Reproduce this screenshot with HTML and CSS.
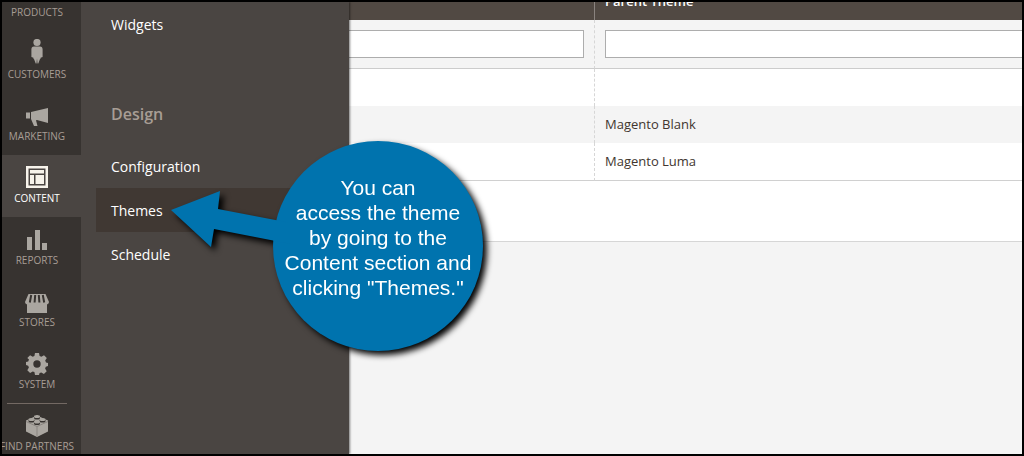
FILE: index.html
```html
<!DOCTYPE html>
<html lang="en">
<head>
    <meta charset="UTF-8">
    <meta name="viewport" content="width=device-width, initial-scale=1.0">
    <title>Themes / Magento Admin</title>
    <link rel="stylesheet" href="styles.css">
</head>
<body>
    <div class="frame">
        <nav class="sidebar">
            <a href="#" class="menu-item first"><span>PRODUCTS</span></a>
            <a href="#" class="menu-item">
                <svg width="22" height="28" viewBox="0 0 22 28">
                    <circle cx="11" cy="3.500" r="3.600"/>
                    <path d="M8 7.500h6c1.800 0 2.600 1.200 2.600 3V18l-2 .8v.7l-.8 1-1.500 4h-.8L11 19.500l-.5 5h-.8l-1.500-4-.8-1v-.7l-2-.8v-7.500c0-1.800.8-3 2.600-3z"/>
                </svg>
                <span>CUSTOMERS</span>
            </a>
            <a href="#" class="menu-item">
                <svg width="22" height="28" viewBox="0 0 22 28">
                    <path d="M0 11.500h4v6H0zM5 11L22 7v15L11 19l-1 .2L11.500 25H8L5 18z"/>
                </svg>
                <span>MARKETING</span>
            </a>
            <a href="#" class="menu-item active">
                <svg width="22" height="28" viewBox="0 0 22 28">
                    <path fill-rule="evenodd" d="M0 3h22v22H0zM2.500 5.500v17h17v-17zM4 7h14v3.500H4zM4 12h4v9H4zM9.500 12H18v9H9.500z"/>
                </svg>
                <span>CONTENT</span>
            </a>
            <a href="#" class="menu-item">
                <svg width="22" height="28" viewBox="0 0 22 28">
                    <path d="M1 12h5v13H1zM9 5h5v20H9zM16 18h5v7h-5z"/>
                </svg>
                <span>REPORTS</span>
            </a>
            <a href="#" class="menu-item">
                <svg width="24" height="28" viewBox="0 0 24 28">
                    <path d="M3.500 7h17L24 15a2.400 2.400 0 0 1-2 2.400V26H2v-8.600A2.400 2.400 0 0 1 0 15z"/>
                    <path class="stripe" d="M6.200 8L4.800 15.500M10.200 8L9.600 15.500M13.800 8l.6 7.500M17.800 8l1.400 7.500"/>
                </svg>
                <span>STORES</span>
            </a>
            <a href="#" class="menu-item">
                <svg width="22" height="28" viewBox="0 0 22 28">
                    <path fill-rule="evenodd" d="M9 4h4l.6 3 1.800.8L18 6.200 20.800 9l-1.600 2.600.8 1.800 2 .6v3l-2.200.8-.7 1.800 1.600 2.600-2.800 2.800-2.600-1.600-1.700.7L13 26H9l-.6-2.900-1.700-.7L4.100 24l-2.800-2.800 1.600-2.600-.7-1.800L0 16v-3l2.200-.6.8-1.800L1.300 9l2.800-2.800 2.600 1.600L8.400 7zM11 11.300a3.700 3.700 0 1 0 0 7.400 3.700 3.700 0 0 0 0-7.400z"/>
                </svg>
                <span>SYSTEM</span>
            </a>
            <a href="#" class="menu-item partners">
                <svg width="24" height="28" viewBox="0 0 24 28">
                    <path d="M12 4.500l11 5v11L12 26 1 20.500v-11z"/>
                    <path class="line" d="M1 10.500l11 5 11-5M12 15.500V26"/>
                    <g class="stud">
                        <path d="M9 5.500v1.500a3 1.600 0 0 0 6 0V5.500zM3.500 8.500V10a3 1.600 0 0 0 6 0V8.500zM14.500 8.500V10a3 1.600 0 0 0 6 0V8.500zM9 11v1.500a3 1.600 0 0 0 6 0V11z"/>
                        <ellipse cx="12" cy="5.500" rx="3" ry="1.500"/>
                        <ellipse cx="6.500" cy="8.500" rx="3" ry="1.500"/>
                        <ellipse cx="17.500" cy="8.500" rx="3" ry="1.500"/>
                        <ellipse cx="12" cy="11" rx="3" ry="1.500"/>
                    </g>
                </svg>
                <span>FIND PARTNERS</span>
            </a>
        </nav>

        <nav class="submenu">
            <a href="#">Widgets</a>
            <h2>Design</h2>
            <a href="#">Configuration</a>
            <a href="#" class="current">Themes</a>
            <a href="#">Schedule</a>
        </nav>

        <main class="content">
            <div class="grid">
                <table>
                    <colgroup>
                        <col class="col-title">
                        <col>
                    </colgroup>
                    <thead>
                        <tr>
                            <th></th>
                            <th>Parent Theme</th>
                        </tr>
                        <tr class="filters">
                            <td><input type="text" aria-label="Theme title"></td>
                            <td><input type="text" aria-label="Parent theme"></td>
                        </tr>
                    </thead>
                    <tbody>
                        <tr><td></td><td></td></tr>
                        <tr class="even"><td></td><td>Magento Blank</td></tr>
                        <tr><td></td><td>Magento Luma</td></tr>
                    </tbody>
                </table>
            </div>
        </main>

        <div class="callout">
            <svg class="arrow" width="120" height="60" viewBox="0 0 120 60">
                <path d="M0 20L49 1 47 19 120 33V54L43 39 40 57z"/>
            </svg>
            <p>You can<br>access the theme<br>by going to the<br>Content section and<br>clicking "Themes."</p>
        </div>
    </div>
</body>
</html>
```

FILE: styles.css
```css
* {
    box-sizing: border-box;
}

body {
    margin: 0;
    font-family: "Open Sans", "Noto Sans", sans-serif;
    font-size: 14px;
    color: #41362f;
}

a {
    text-decoration: none;
}

.frame {
    position: relative;
    display: flex;
    height: 100vh;
    border: 2px solid #000;
    background: #f4f4f4;
    overflow: hidden;
}

/* left menu */
.sidebar {
    flex: 0 0 79px;
    overflow: hidden;
    background: #373330;
}

.menu-item {
    display: flex;
    flex-direction: column;
    align-items: center;
    height: 62px;
    padding: 8px 9px 0 0;
    font-size: 10px;
    line-height: 14px;
    color: #a79d95;
    white-space: nowrap;
}

.menu-item.first {
    height: 29px;
    padding-top: 3px;
}

.menu-item svg {
    flex: none;
    fill: #aaa6a0;
}

.menu-item.active {
    background: #4a4542;
    color: #fff;
}

.menu-item.active svg {
    fill: #f7f3eb;
}

.menu-item.partners {
    position: relative;
}

.menu-item.partners::before {
    content: "";
    position: absolute;
    top: 0;
    left: 5px;
    right: 14px;
    border-top: 1px solid #736963;
}

.menu-item .stripe {
    fill: none;
    stroke: #373330;
    stroke-width: 2;
}

.menu-item .line {
    fill: none;
    stroke: #8a8580;
}

.menu-item .stud path {
    fill: #373330;
}

/* open submenu */
.submenu {
    position: relative;
    flex: 0 0 268px;
    padding-left: 15px;
    background: #4a4542;
    box-shadow: 1px 0 2px rgba(0, 0, 0, 0.5);
    clip-path: inset(0 -5px 0 0);
}

.submenu a {
    display: block;
    padding: 2px 0 0 15px;
    line-height: 42px;
    color: #fff;
}

.submenu a.current {
    background: #403833;
}

.submenu h2 {
    margin: 56px 0 18px;
    padding-left: 15px;
    font-size: 16px;
    font-weight: 600;
    line-height: 24px;
    color: #a79d95;
}

/* themes grid */
.content {
    flex: 1;
    min-width: 0;
}

.grid {
    padding-bottom: 60px;
    background: #fff;
    border-bottom: 1px solid #d6d6d6;
}

table {
    width: 100%;
    margin-top: -20px;
    table-layout: fixed;
    border-spacing: 0;
    font-size: 13px;
}

.col-title {
    width: 246px;
}

th,
td {
    height: 37px;
    padding: 0 0 0 10px;
    text-align: left;
}

tbody td {
    padding-bottom: 2px;
}

th:first-child,
td:first-child {
    padding: 0 10px 0 0;
    border-right: 1px dashed #d6d6d6;
}

th {
    height: 38px;
    background: #514943;
    color: #fff;
    font-weight: 600;
}

th:first-child {
    border-right: 1px solid #8a837f;
}

.filters td {
    height: 49px;
    background: #f4f4f4;
    border-bottom: 1px solid #ccc;
}

.filters input {
    display: block;
    width: 100%;
    height: 28px;
    padding: 0 10px;
    background: #fff;
    border: 1px solid #adadad;
    border-right: 0;
    border-radius: 0;
}

.filters td:first-child input {
    border-left: 0;
    border-right: 1px solid #adadad;
}

.even td {
    background: #f4f4f4;
}

tbody tr:last-child td {
    height: 38px;
    border-bottom: 1px solid #d0d0d0;
}

/* help bubble over the page */
.callout {
    position: absolute;
    top: 139px;
    left: 271px;
    filter: drop-shadow(4px 4px 3px #000);
}

.callout p {
    width: 210px;
    height: 210px;
    margin: 0;
    padding-top: 34px;
    border-radius: 50%;
    background: #0073ae;
    color: #fff;
    font-family: "Liberation Sans", Arial, sans-serif;
    font-size: 21px;
    line-height: 25px;
    text-align: center;
    white-space: nowrap;
}

.arrow {
    position: absolute;
    top: 49px;
    left: -102px;
    fill: #0073ae;
}
```
